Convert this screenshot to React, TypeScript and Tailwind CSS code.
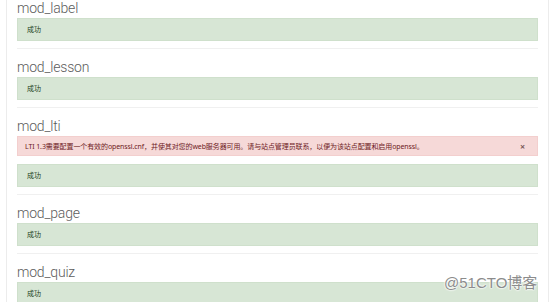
import React from "react";

const Ok = () => (
  <div className="h-[23px] flex items-center pl-[9px] bg-[#d7e6d5] border border-[#cfe0cc] text-[#1c3f1a] text-[7px] leading-none">
    成功
  </div>
);

const Section = ({ name, first, children }: { name: string; first?: boolean; children: React.ReactNode }) => (
  <div className={first ? "-mt-[2px] pb-[7px]" : "border-t border-[#f0f0f0] pt-[8px] pb-[7px]"}>
    <div className="h-[20px] leading-[20px] text-[14px] font-light text-[#5c5c5c] [font-family:Roboto,'Open_Sans',sans-serif] tracking-[-0.2px]">
      {name}
    </div>
    {children}
  </div>
);

export default function App() {
  return (
    <div className="relative w-[553px] h-[302px] overflow-hidden bg-white [font-family:'Noto_Sans','Noto_Sans_CJK_SC',sans-serif]">
      <div className="ml-[6px] w-[543px] h-[320px] border-x border-[#ececec] px-[10px]">
        <Section name="mod_label" first>
          <Ok />
        </Section>
        <Section name="mod_lesson">
          <Ok />
        </Section>
        <Section name="mod_lti">
          <div className="h-[20px] mb-[8px] flex items-center justify-between pl-[7px] pr-[12px] bg-[#f6d9d8] border border-[#f3cfce] text-[#6e211e] text-[7px] leading-none tracking-[-0.1px]">
            <span>LTI 1.3需要配置一个有效的openssl.cnf，并使其对您的web服务器可用。请与站点管理员联系，以便为该站点配置和启用openssl。</span>
            <span className="text-[9px] text-[#7a5a5a] font-bold">×</span>
          </div>
          <Ok />
        </Section>
        <Section name="mod_page">
          <Ok />
        </Section>
        <Section name="mod_quiz">
          <Ok />
        </Section>
      </div>
      <div className="absolute left-[444px] top-[273px] text-[15px] leading-[20px] text-[#8c8c8c] [font-family:'Liberation_Sans','Noto_Sans_CJK_SC',sans-serif] [text-shadow:0_0_2px_#fff,0_0_2px_#fff,0_0_2px_#fff]">
        @51CTO博客
      </div>
    </div>
  );
}
